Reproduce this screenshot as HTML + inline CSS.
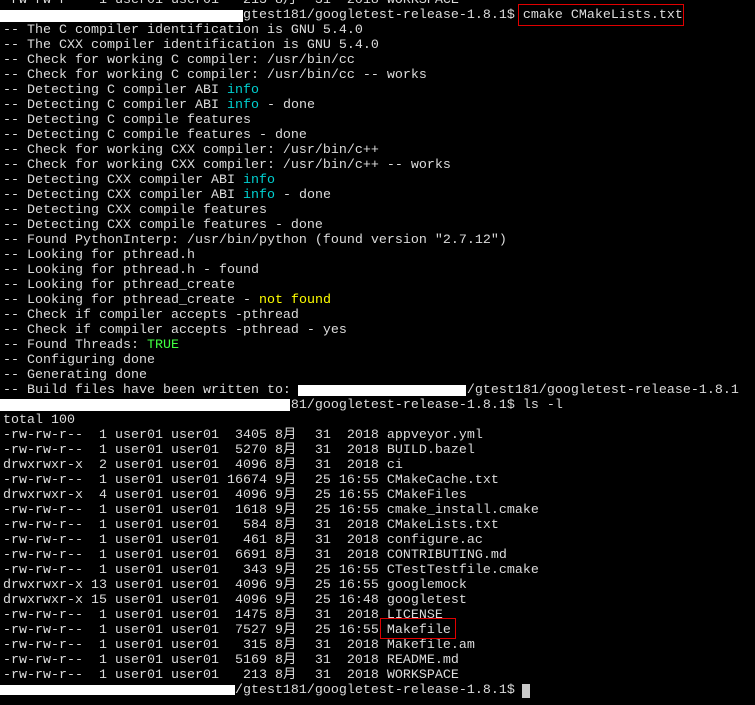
<!DOCTYPE html>
<html><head><meta charset="utf-8"><style>
html,body{margin:0;padding:0;background:#000;width:755px;height:705px;overflow:hidden;position:relative}
pre{position:absolute;left:3px;top:-7px;margin:0;font-family:"Liberation Mono","Noto Sans CJK SC",monospace;font-size:13.33px;line-height:15px;color:#dcdcdc;white-space:pre}
.c{color:#00d0d0}.g{color:#40ff40}.y{color:#ffff00}
.m{display:inline-block;width:16px;text-align:left}
.w{position:absolute;background:#fff}
.r{position:absolute;border:1.5px solid #e00000}
.cur{position:absolute;background:#c8c8c8}
</style></head><body>
<pre>-rw-rw-r--  1 user01 user01   213 8<span class="m">月</span>  31  2018 WORKSPACE
                              gtest181/googletest-release-1.8.1$ cmake CMakeLists.txt
-- The C compiler identification is GNU 5.4.0
-- The CXX compiler identification is GNU 5.4.0
-- Check for working C compiler: /usr/bin/cc
-- Check for working C compiler: /usr/bin/cc -- works
-- Detecting C compiler ABI <span class="c">info</span>
-- Detecting C compiler ABI <span class="c">info</span> - done
-- Detecting C compile features
-- Detecting C compile features - done
-- Check for working CXX compiler: /usr/bin/c++
-- Check for working CXX compiler: /usr/bin/c++ -- works
-- Detecting CXX compiler ABI <span class="c">info</span>
-- Detecting CXX compiler ABI <span class="c">info</span> - done
-- Detecting CXX compile features
-- Detecting CXX compile features - done
-- Found PythonInterp: /usr/bin/python (found version "2.7.12")
-- Looking for pthread.h
-- Looking for pthread.h - found
-- Looking for pthread_create
-- Looking for pthread_create - <span class="y">not found</span>
-- Check if compiler accepts -pthread
-- Check if compiler accepts -pthread - yes
-- Found Threads: <span class="g">TRUE</span>
-- Configuring done
-- Generating done
-- Build files have been written to:                      /gtest181/googletest-release-1.8.1
                                    81/googletest-release-1.8.1$ ls -l
total 100
-rw-rw-r--  1 user01 user01  3405 8<span class="m">月</span>  31  2018 appveyor.yml
-rw-rw-r--  1 user01 user01  5270 8<span class="m">月</span>  31  2018 BUILD.bazel
drwxrwxr-x  2 user01 user01  4096 8<span class="m">月</span>  31  2018 ci
-rw-rw-r--  1 user01 user01 16674 9<span class="m">月</span>  25 16:55 CMakeCache.txt
drwxrwxr-x  4 user01 user01  4096 9<span class="m">月</span>  25 16:55 CMakeFiles
-rw-rw-r--  1 user01 user01  1618 9<span class="m">月</span>  25 16:55 cmake_install.cmake
-rw-rw-r--  1 user01 user01   584 8<span class="m">月</span>  31  2018 CMakeLists.txt
-rw-rw-r--  1 user01 user01   461 8<span class="m">月</span>  31  2018 configure.ac
-rw-rw-r--  1 user01 user01  6691 8<span class="m">月</span>  31  2018 CONTRIBUTING.md
-rw-rw-r--  1 user01 user01   343 9<span class="m">月</span>  25 16:55 CTestTestfile.cmake
drwxrwxr-x 13 user01 user01  4096 9<span class="m">月</span>  25 16:55 googlemock
drwxrwxr-x 15 user01 user01  4096 9<span class="m">月</span>  25 16:48 googletest
-rw-rw-r--  1 user01 user01  1475 8<span class="m">月</span>  31  2018 LICENSE
-rw-rw-r--  1 user01 user01  7527 9<span class="m">月</span>  25 16:55 Makefile
-rw-rw-r--  1 user01 user01   315 8<span class="m">月</span>  31  2018 Makefile.am
-rw-rw-r--  1 user01 user01  5169 8<span class="m">月</span>  31  2018 README.md
-rw-rw-r--  1 user01 user01   213 8<span class="m">月</span>  31  2018 WORKSPACE
                             /gtest181/googletest-release-1.8.1$ </pre>
<div class="w" style="left:0;top:10px;width:243px;height:12px"></div>
<div class="w" style="left:298px;top:385px;width:168px;height:11px"></div>
<div class="w" style="left:0;top:399px;width:290px;height:12px"></div>
<div class="w" style="left:0;top:685px;width:235px;height:10px"></div>
<div class="r" style="left:518px;top:4px;width:164px;height:20px"></div>
<div class="r" style="left:380px;top:618px;width:74px;height:19px"></div>
<div class="cur" style="left:522px;top:684px;width:8px;height:14px"></div>
</body></html>
